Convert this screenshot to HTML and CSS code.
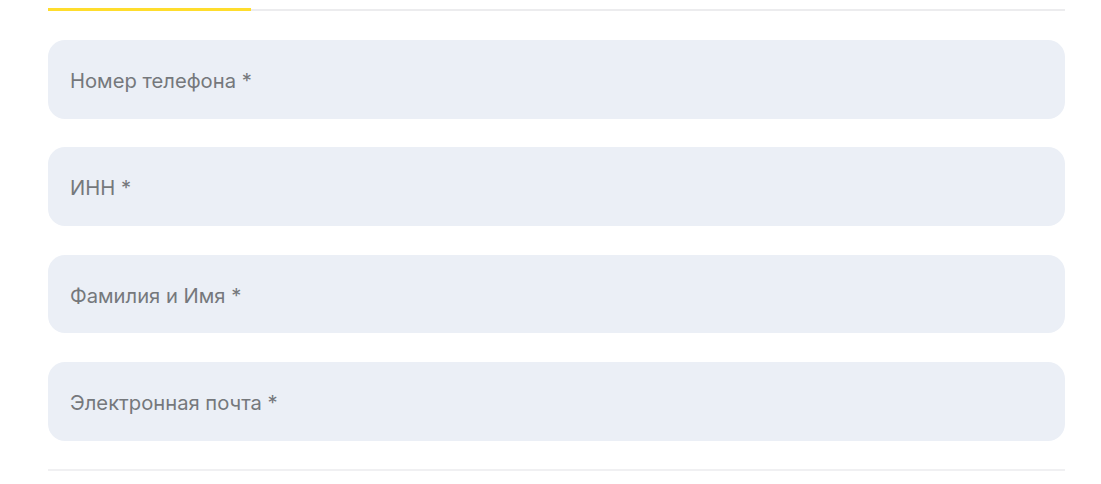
FILE: index.html
```html
<!DOCTYPE html>
<html lang="ru">
<head>
<meta charset="utf-8">
<title>Регистрация</title>
<link rel="stylesheet" href="styles.css">
</head>
<body>
<div class="form">
  <div class="progress"><div class="progress-fill"></div></div>
  <div class="fields">
    <label class="field"><span class="field-label">Номер телефона *</span></label>
    <label class="field"><span class="field-label">ИНН *</span></label>
    <label class="field"><span class="field-label">Фамилия и Имя *</span></label>
    <label class="field"><span class="field-label">Электронная почта *</span></label>
  </div>
  <div class="divider"></div>
</div>
</body>
</html>
```
FILE: styles.css
```css
html, body {
  margin: 0;
  background: #ffffff;
}

body {
  font-family: Inter, "Liberation Sans", Arial, sans-serif;
}

.form {
  width: 1017px;
  margin-left: 48px;
  padding-top: 8px;
}

.progress {
  height: 3px;
  display: flex;
  align-items: center;
  background: linear-gradient(#ffffff 0 1px, #ececee 1px 3px);
}

.progress-fill {
  width: 203px;
  height: 3px;
  background: #ffdd2d;
}

.fields {
  display: flex;
  flex-direction: column;
  gap: 28.4px;
  margin-top: 29px;
}

.field {
  height: 78.9px;
  border-radius: 17px;
  background: #ebeff6;
  display: flex;
  align-items: center;
  padding: 2px 0 0 22px;
  box-sizing: border-box;
}

.field-label {
  font-size: 20.2px;
  color: #75787c;
}

.divider {
  height: 2px;
  margin-top: 28px;
  background: #f0f0f2;
}
```
